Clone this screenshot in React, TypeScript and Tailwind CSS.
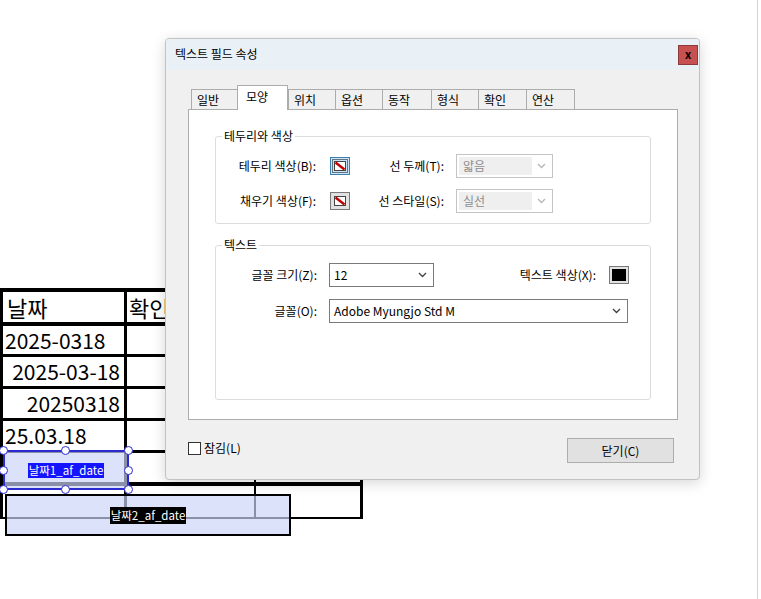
import React from 'react';

const TABS = [
  { label: '일반', w: 'w-[46px]' },
  { label: '모양', w: 'w-[51px]', active: true },
  { label: '위치', w: 'w-[47px]' },
  { label: '옵션', w: 'w-[47px]' },
  { label: '동작', w: 'w-[49px]' },
  { label: '형식', w: 'w-[47px]' },
  { label: '확인', w: 'w-[48px]' },
  { label: '연산', w: 'w-[49px]', last: true },
];

const Chevron = ({ color }: { color: string }) => (
  <svg width="9" height="6" viewBox="0 0 9 6">
    <path d="M1 1 L4.5 4.5 L8 1" fill="none" stroke={color} strokeWidth="1.4" />
  </svg>
);

// colour swatch with "no colour" red slash
const NoColorSwatch = ({ focused }: { focused?: boolean }) => (
  <svg width="20" height="18" viewBox="0 0 20 18">
    <rect x="0.5" y="0.5" width="19" height="17" fill={focused ? '#cce4f7' : '#e1e1e1'} stroke={focused ? '#3c7fb1' : '#7a7a7a'} />
    {focused && <rect x="2.5" y="2.5" width="15" height="13" fill="none" stroke="#000" strokeDasharray="1 1" />}
    <rect x="4.5" y="4.5" width="11" height="9" fill="#fff" stroke="#444" />
    <line x1="5.5" y1="5.5" x2="14.5" y2="12.5" stroke="#c00000" strokeWidth="2.4" />
  </svg>
);

const BlackSwatch = () => (
  <svg width="20" height="18" viewBox="0 0 20 18">
    <rect x="0.5" y="0.5" width="19" height="17" fill="#e1e1e1" stroke="#7a7a7a" />
    <rect x="3" y="3" width="14" height="12" fill="#000" />
  </svg>
);

const DisabledSelect = ({ value }: { value: string }) => (
  <div className="flex h-[24px] w-[97px] border border-[#c4c4c4] bg-white p-[2px]">
    <div className="flex flex-1 items-center bg-[#efefef] pl-[4px] text-[#8d8d8d]">{value}</div>
    <div className="flex w-[18px] items-center justify-center">
      <Chevron color="#b8b8b8" />
    </div>
  </div>
);

const Select = ({ value, className }: { value: string; className: string }) => (
  <div className={`flex h-[24px] items-center border border-[#7a7a7a] bg-white pl-[4px] pr-[6px] ${className}`}>
    <span className="flex-1">{value}</span>
    <Chevron color="#444" />
  </div>
);

const GroupBox = ({ title, className, children }: { title: string; className: string; children: React.ReactNode }) => (
  <div className={`relative rounded-[3px] border border-[#dcdcdc] ${className}`}>
    <span className="absolute -top-[9px] left-[6px] bg-white px-[2px] leading-[16px]">{title}</span>
    {children}
  </div>
);

const Handle = ({ pos }: { pos: string }) => (
  <div className={`absolute h-[9px] w-[9px] rounded-full border-[1.5px] border-[#2a2ad0] bg-white ${pos}`} />
);

export default function App() {
  return (
    <div className="relative h-[599px] w-[761px] overflow-hidden bg-white font-['Noto_Sans_CJK_KR',sans-serif] text-black">
      {/* page edge */}
      <div className="absolute bottom-0 left-[757px] top-0 w-px bg-[#d2d2d2]" />

      {/* document table */}
      <div className="absolute left-0 top-[288px] w-[363px] border-l-[3px] border-r-[3px] border-t-4 border-black text-[21px] leading-none">
        <div className="flex h-[34px] border-b-4 border-black text-[22px]">
          <div className="flex h-full w-[124px] items-center border-r-[3px] border-black pl-[4px]">날짜</div>
          <div className="flex h-full w-[129px] items-center border-r-2 border-black pl-[2px]">확인</div>
          <div className="h-full flex-1" />
        </div>
        <div className="flex h-[31px] border-b-[3px] border-black">
          <div className="flex h-full w-[124px] items-center border-r-[3px] border-black pl-[2px]">2025-0318</div>
          <div className="h-full w-[129px] border-r-2 border-black" />
          <div className="h-full flex-1" />
        </div>
        <div className="flex h-[32px] border-b-[3px] border-black">
          <div className="flex h-full w-[124px] items-center justify-end border-r-[3px] border-black pr-[4px]">2025-03-18</div>
          <div className="h-full w-[129px] border-r-2 border-black" />
          <div className="h-full flex-1" />
        </div>
        <div className="flex h-[32px] border-b-[3px] border-black">
          <div className="flex h-full w-[124px] items-center justify-end border-r-[3px] border-black pr-[4px]">20250318</div>
          <div className="h-full w-[129px] border-r-2 border-black" />
          <div className="h-full flex-1" />
        </div>
        <div className="flex h-[32px] border-b-[3px] border-black">
          <div className="flex h-full w-[124px] items-center border-r-[3px] border-black pl-[2px]">25.03.18</div>
          <div className="h-full w-[129px] border-r-2 border-black" />
          <div className="h-full flex-1" />
        </div>
        <div className="flex h-[33px] border-b-4 border-black">
          <div className="h-full w-[124px] border-r-[3px] border-black" />
          <div className="h-full w-[129px] border-r-2 border-black" />
          <div className="h-full flex-1" />
        </div>
        <div className="flex h-[33px] border-b-2 border-black">
          <div className="h-full w-[124px] border-r-[3px] border-black" />
          <div className="h-full w-[129px] border-r-2 border-black" />
          <div className="h-full flex-1" />
        </div>
      </div>

      {/* form field 1 (selected) */}
      <div className="absolute left-[3px] top-[450px] flex h-[40px] w-[126px] items-center justify-center border-2 border-[#2a2ad0] bg-[rgba(204,212,248,0.68)]">
        <span className="bg-[#1414ff] px-[1px] text-[11.5px] leading-[15px] text-white">날짜1_af_date</span>
        <Handle pos="-left-[6px] -top-[6px]" />
        <Handle pos="left-[56px] -top-[6px]" />
        <Handle pos="-right-[6px] -top-[6px]" />
        <Handle pos="-left-[6px] top-[14px]" />
        <Handle pos="-right-[6px] top-[14px]" />
        <Handle pos="-left-[6px] -bottom-[6px]" />
        <Handle pos="left-[56px] -bottom-[6px]" />
        <Handle pos="-right-[6px] -bottom-[6px]" />
      </div>

      {/* form field 2 */}
      <div className="absolute left-[5px] top-[494px] flex h-[42px] w-[286px] items-center justify-center border-2 border-black bg-[rgba(204,212,248,0.68)]">
        <span className="bg-black px-[1px] text-[11.5px] leading-[17px] text-white">날짜2_af_date</span>
      </div>

      {/* properties dialog */}
      <div className="absolute left-[165px] top-[38px] flex h-[442px] w-[535px] flex-col overflow-hidden rounded-[4px] border border-[#c2c2c2] bg-[#f0f0f0] text-[12px] shadow-[0_3px_14px_rgba(0,0,0,0.16)]">
        <div className="flex h-[31px] shrink-0 items-center bg-[#eaf1f6] pl-[9px]">
          <span className="mt-[-2px]">텍스트 필드 속성</span>
          <div className="ml-auto mr-px flex h-[20px] w-[20px] items-center justify-center border border-[#8c3a3a] bg-[#c75050] text-[11px] font-bold leading-none">x</div>
        </div>

        <div className="flex flex-col px-[22px] pt-[16px]">
          {/* tabs */}
          <div className="flex h-[23px] items-end pl-[3px]">
            {TABS.map((t) =>
              t.active ? (
                <div key={t.label} className={`relative z-10 -mb-px h-[25px] border border-b-0 border-[#acacac] bg-white pl-[8px] pt-[2px] ${t.w}`}>
                  {t.label}
                </div>
              ) : (
                <div key={t.label} className={`flex h-[20px] items-center border-l border-t border-[#acacac] bg-[#f0f0f0] pl-[5px] ${t.last ? 'border-r' : ''} ${t.w}`}>
                  {t.label}
                </div>
              )
            )}
          </div>

          {/* tab panel */}
          <div className="flex h-[311px] w-[490px] flex-col gap-[21px] border border-[#acacac] bg-white px-[26px] pt-[26px]">
            <GroupBox title="테두리와 색상" className="h-[88px] pt-[17px]">
              <div className="flex flex-col gap-[11px]">
                <div className="flex h-[24px] items-center">
                  <span className="w-[100px] text-right">테두리 색상(B):</span>
                  <div className="ml-[14px]"><NoColorSwatch focused /></div>
                  <span className="w-[94px] text-right">선 두께(T):</span>
                  <div className="ml-[12px]"><DisabledSelect value="얇음" /></div>
                </div>
                <div className="flex h-[24px] items-center">
                  <span className="w-[100px] text-right">채우기 색상(F):</span>
                  <div className="ml-[14px]"><NoColorSwatch /></div>
                  <span className="w-[94px] text-right">선 스타일(S):</span>
                  <div className="ml-[12px]"><DisabledSelect value="실선" /></div>
                </div>
              </div>
            </GroupBox>

            <GroupBox title="텍스트" className="h-[155px] pt-[17px]">
              <div className="flex flex-col gap-[12px]">
                <div className="flex h-[24px] items-center">
                  <span className="w-[101px] text-right">글꼴 크기(Z):</span>
                  <Select value="12" className="ml-[12px] w-[105px]" />
                  <span className="ml-auto">텍스트 색상(X):</span>
                  <div className="ml-[13px] mr-[21px]"><BlackSwatch /></div>
                </div>
                <div className="flex h-[24px] items-center">
                  <span className="w-[101px] text-right">글꼴(O):</span>
                  <Select value="Adobe Myungjo Std M" className="ml-[12px] w-[299px]" />
                </div>
              </div>
            </GroupBox>
          </div>

          {/* footer */}
          <div className="mt-[18px] flex items-start">
            <div className="mt-px flex items-center gap-[3px]">
              <div className="h-[13px] w-[13px] border border-[#333] bg-white" />
              <span>잠김(L)</span>
            </div>
            <div className="ml-auto mr-[3px] flex h-[25px] w-[107px] items-center justify-center border border-[#adadad] bg-[#e1e1e1]">
              닫기(C)
            </div>
          </div>
        </div>
      </div>
    </div>
  );
}
